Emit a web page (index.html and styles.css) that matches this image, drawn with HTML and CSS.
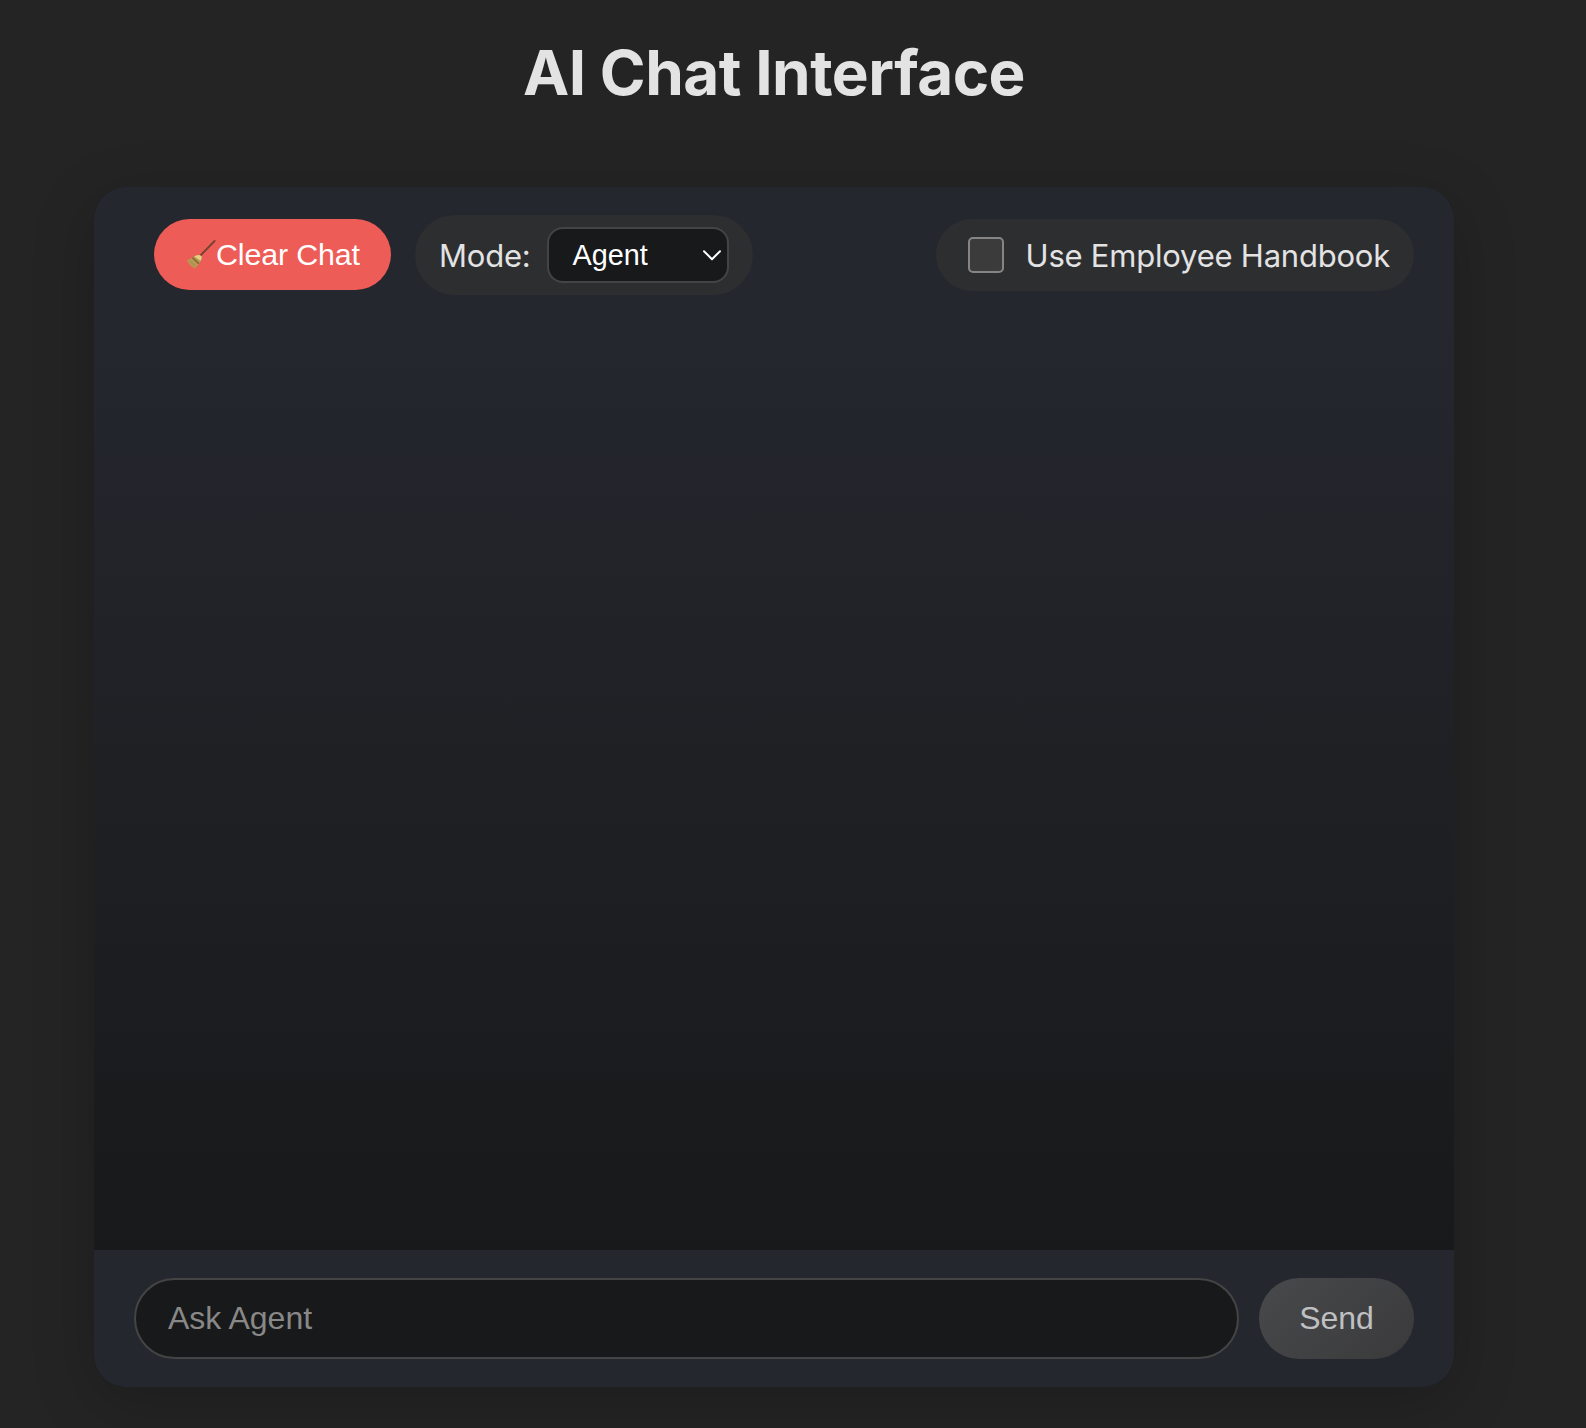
FILE: index.html
```html
<!DOCTYPE html>
<html lang="en">
<head>
<meta charset="utf-8">
<title>AI Chat Interface</title>
<link rel="stylesheet" href="styles.css">
</head>
<body>
<main class="app">
  <h1 class="title">AI Chat Interface</h1>
  <section class="chat">
    <header class="toolbar">
      <button class="clear" type="button">
        <svg class="broom" viewBox="0 0 30 30" aria-hidden="true">
          <path d="M14.500 15.500 28.600 1" stroke="#74422f" stroke-width="1.800" stroke-linecap="round"/>
          <path d="M9 16Q14 13.600 15.600 16.400Q16.200 19.500 13.600 23L9.200 28.600Q3.500 26 1 20.600Z" fill="#b89a54"/>
          <path d="M9.500 15.700Q14 13.800 15.600 16.400Q16 18.400 14.600 20.800L8.400 16.400Z" fill="#e5cf82"/>
          <path d="M6.400 17.600 12.800 23.600" stroke="#856637" stroke-width="1.500"/>
          <path d="M3.200 20.600 9.600 26.600" stroke="#a78a4b" stroke-width="1"/>
        </svg><span>Clear Chat</span>
      </button>
      <div class="mode">
        <span class="mode-label">Mode:</span>
        <button class="select" type="button"><span>Agent</span>
          <svg class="chevron" viewBox="0 0 18 11" aria-hidden="true"><path d="M1 1.200 9 9.200 17 1.200" fill="none" stroke="#fff" stroke-width="2" stroke-linecap="round" stroke-linejoin="round"/></svg>
        </button>
      </div>
      <label class="handbook">
        <input class="check" type="checkbox">
        <span class="handbook-label">Use Employee Handbook</span>
      </label>
    </header>
    <div class="messages"></div>
    <form class="composer">
      <input class="prompt" type="text" placeholder="Ask Agent">
      <button class="send" type="button" disabled>Send</button>
    </form>
  </section>
</main>
</body>
</html>
```
FILE: styles.css
```css
* { box-sizing: border-box; }
body {
  margin: 0;
  height: 1428px;
  overflow: hidden;
  background: #242424;
  color: #e3e3e3;
  font-family: Inter, "Liberation Sans", sans-serif;
}
button, input { font-family: "Liberation Sans", Arial, sans-serif; margin: 0; }
.app { width: 1360px; margin-left: 94px; padding-top: 38px; }
.title {
  margin: 0 0 79px;
  height: 70px;
  line-height: 70px;
  font-size: 62px;
  font-weight: 700;
  letter-spacing: -.5px;
  text-align: center;
}
.chat {
  height: 1200px;
  display: flex;
  flex-direction: column;
  border-radius: 32px;
  overflow: hidden;
  background: #18191a;
  box-shadow: 0 16px 64px rgba(0, 0, 0, .2);
}
.toolbar {
  height: 136px;
  padding: 0 40px 0 60px;
  display: flex;
  align-items: center;
  background: #24272e;
}
.clear {
  width: 237px;
  height: 71px;
  margin-bottom: 1px;
  padding: 0 0 0 32px;
  display: flex;
  align-items: center;
  border: 0;
  border-radius: 40px;
  background: #ed5c57;
  color: #fff;
  font-size: 30.4px;
  letter-spacing: -.15px;
  white-space: nowrap;
}
.broom { width: 30px; height: 30px; flex: none; fill: none; }
.mode {
  width: 338px;
  height: 80px;
  margin-left: 24px;
  padding: 0 24px;
  display: flex;
  align-items: center;
  justify-content: space-between;
  border-radius: 40px;
  background: #2d2e30;
}
.mode-label, .handbook-label {
  font-size: 31px;
  font-weight: 400;
  letter-spacing: -.22px;
  white-space: nowrap;
}
.select {
  width: 182px;
  height: 56px;
  padding: 0 6px 0 23.5px;
  display: flex;
  align-items: center;
  justify-content: space-between;
  border: 2px solid #444;
  border-radius: 16px;
  background: #18191a;
  color: #fff;
  font-size: 28.8px;
}
.chevron { width: 18px; height: 11px; }
.handbook {
  width: 478px;
  height: 72px;
  margin-left: auto;
  padding: 0 24px 0 32px;
  display: flex;
  align-items: center;
  justify-content: space-between;
  border-radius: 40px;
  background: #2d2e30;
}
.check {
  appearance: none;
  width: 36px;
  height: 36px;
  border: 2px solid #858585;
  border-radius: 5px;
  background: #3b3b3b;
}
.messages { flex: 1; background: linear-gradient(#24272e, #18191a); }
.composer {
  height: 137px;
  padding: 28px 40px;
  display: flex;
  gap: 20px;
  background: #24272e;
}
.prompt {
  flex: 1;
  padding: 0 32px;
  border: 2px solid #444;
  border-radius: 41px;
  background: #18191a;
  color: #e3e3e3;
  font-size: 32px;
}
.prompt::placeholder { color: #888; }
.send {
  width: 155px;
  padding: 0;
  border: 0;
  border-radius: 41px;
  background: linear-gradient(135deg, #48494b, #3a3a3b);
  color: #bfc0c2;
  font-size: 32px;
}
```
